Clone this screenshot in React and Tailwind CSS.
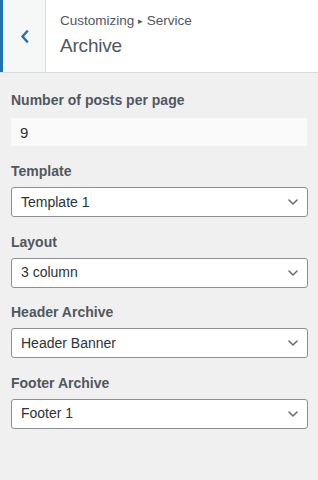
import React from 'react'

const FIELDS = [
  { label: 'Template', value: 'Template 1' },
  { label: 'Layout', value: '3 column' },
  { label: 'Header Archive', value: 'Header Banner' },
  { label: 'Footer Archive', value: 'Footer 1' },
]

const font = { fontFamily: '"Liberation Sans", Arial, sans-serif' }

function Chevron() {
  return (
    <svg width="10" height="6" viewBox="0 0 10 6" fill="none">
      <path d="M1 1l4 4 4-4" stroke="#646970" strokeWidth="1.5" strokeLinecap="round" strokeLinejoin="round" />
    </svg>
  )
}

export default function App() {
  return (
    <div className="w-[318px] h-[480px] bg-[#f0f0f1] text-[#2c3338]" style={font}>
      {/* Header */}
      <div className="flex h-[73px] bg-white border-b border-[#dcdcde]">
        <button className="w-[46px] h-full flex items-center justify-center bg-[#f6f7f7] border-l-[3px] border-[#2271b1] border-r border-r-[#dcdcde]">
          <svg width="9" height="13" viewBox="0 0 9 13" fill="none">
            <path d="M7 1.5L2.5 6.5 7 11.5" stroke="#2271b1" strokeWidth="2.4" strokeLinecap="square" strokeLinejoin="miter" />
          </svg>
        </button>
        <div className="pl-[14px] pt-[12px]">
          <p className="text-[13.5px] leading-[18px] text-[#50575e]">
            Customizing <span className="text-[9px] align-[1px]">▸</span> Service
          </p>
          <h1 className="text-[19px] leading-[26px] mt-[3px] text-[#50575e] tracking-[-0.2px]">Archive</h1>
        </div>
      </div>

      {/* Controls */}
      <div className="px-[11px] pt-[17px]">
        <label className="block text-[14px] leading-[20px] font-bold text-[#50575e]">Number of posts per page</label>
        <input
          type="number"
          defaultValue="9"
          className="mt-[8px] block w-[296px] h-[28px] px-[9px] bg-[#fafafb] text-[15px] text-[#2c3338] outline-none"
        />

        <div className="mt-[15px]">
          {FIELDS.map(({ label, value }) => (
            <div key={label} className="mb-[14.5px]">
              <label className="block text-[14px] leading-[20px] font-bold text-[#50575e]">{label}</label>
              <div className="mt-[6px] flex items-center justify-between w-[297px] h-[30px] pl-[9px] pr-[9px] bg-white border border-[#8c8f94] rounded-[3px]">
                <span className="text-[14px] text-[#2c3338]">{value}</span>
                <Chevron />
              </div>
            </div>
          ))}
        </div>
      </div>
    </div>
  )
}
